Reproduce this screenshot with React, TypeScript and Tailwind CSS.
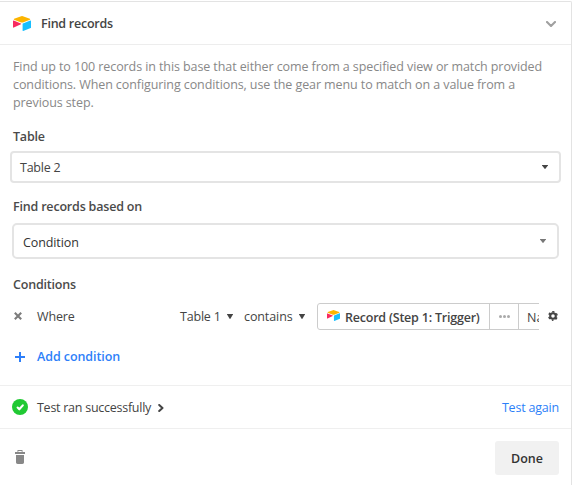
import type { ReactNode } from 'react';

function BaseLogo({ className }: { className: string }) {
  return (
    <svg className={className} viewBox="0 0 18 15" aria-hidden="true">
      <path d="M8.2.2a2.5 2.5 0 0 1 1.7 0l7 2.6c.4.2.4.7 0 .9L9.9 6.4a2.5 2.5 0 0 1-1.8 0L1.1 3.7c-.4-.2-.4-.7 0-.9z" fill="#fcb400" />
      <path d="M9.6 7.9v6.600c0 .4.3.6.6.5l7.5-2.900a.5.5 0 0 0 .3-.5V5c0-.4-.3-.6-.6-.5L9.900 7.400a.5.5 0 0 0-.3.5z" fill="#18bfff" />
      <path d="M7.900 8.200.8 11.600c-.4.2-.8 0-.8-.4V5.100c0-.4.3-.6.7-.5l7.100 2.800c.5.2.5.6.1.8z" fill="#f82b60" />
    </svg>
  );
}

function Caret({ className }: { className: string }) {
  return (
    <svg className={className} viewBox="0 0 8 5" preserveAspectRatio="none" fill="currentColor" aria-hidden="true">
      <path d="M.3 0h7.400c.3 0 .4.3.2.6L4.500 4.700a.7.7 0 0 1-1 0L.1.6C-.1.3 0 0 .3 0z" />
    </svg>
  );
}

function Label({ children }: { children: ReactNode }) {
  return (
    <div className="h-[18px] pl-[13px] pt-px text-[12.5px] font-semibold leading-[18px] tracking-[-0.19px] text-[#4a4a4a]">
      {children}
    </div>
  );
}

export default function App() {
  return (
    <div className="h-[485px] w-[572px] overflow-hidden bg-white pt-px font-['Open_Sans','Noto_Sans',sans-serif] text-[12.5px] leading-[18px] text-[#444]">
      <div className="flex h-[484px] flex-col rounded-tr-[2px] border-r border-t border-[#e3e3e3]">
        <header className="flex h-[43px] shrink-0 items-center border-b border-[#ededed] pl-[13px] pr-[15px] pt-px">
          <BaseLogo className="h-[15px] w-[18px]" />
          <h1 className="ml-[10px] pt-px text-[12.5px] font-semibold tracking-[-0.25px]">Find records</h1>
          <svg className="ml-auto mt-px" width="10" height="6" viewBox="0 0 10 6" fill="none" stroke="#a0a0a0" strokeWidth="2.1" strokeLinecap="round" strokeLinejoin="round">
            <path d="M1 1l4 4 4-4" />
          </svg>
        </header>

        <main className="flex h-[340px] shrink-0 flex-col pt-[13px]">
          <p className="whitespace-nowrap pl-[13px] tracking-[-0.09px] text-[#888]">
            Find up to 100 records in this base that either come from a specified view or match provided
            <br />
            conditions. When configuring conditions, use the gear menu to match on a value from a
            <br />
            previous step.
          </p>

          <div className="mt-[15px]">
            <Label>Table</Label>
            <button type="button" className="ml-[10px] mt-[6px] flex h-8 w-[551px] items-center justify-between rounded-[4px] border-2 border-[#e4e4e4] pl-2 pr-[11px]">
              <span className="pt-px tracking-[-0.25px]">Table 2</span>
              <Caret className="h-1 w-1.5 text-[#444]" />
            </button>
          </div>

          <div className="mt-[14px]">
            <Label>Find records based on</Label>
            <button type="button" className="ml-[12px] mt-[8px] flex h-9 w-[547px] items-center justify-between rounded-[5px] border-2 border-[#e4e4e4] pl-[9px] pr-[11px]">
              <span className="mt-[3px] tracking-[-0.1px] text-[#333]">Condition</span>
              <Caret className="h-1 w-1.5 text-[#777]" />
            </button>
          </div>

          <div className="mt-[16px]">
            <Label>Conditions</Label>
            <div className="mt-[10px] flex h-[27px] items-center whitespace-nowrap pl-[14px]">
              <svg className="mb-px" width="8" height="8" viewBox="0 0 8 8" stroke="#7c7c7c" strokeWidth="2.1">
                <path d="M.8.8l6.400 6.400M7.200.8L.8 7.200" />
              </svg>
              <span className="ml-[15px] w-[143px] tracking-[-0.15px]">Where</span>
              <span className="w-[47px] tracking-[-0.2px]">Table 1</span>
              <Caret className="h-[5px] w-1.5" />
              <span className="ml-[11px] w-[55px] tracking-[-0.1px]">contains</span>
              <Caret className="h-[5px] w-1.5" />
              <div className="ml-[12px] h-[27px] w-[222px] overflow-hidden">
                <div className="flex h-[27px] w-[260px] items-stretch rounded-[3px] border border-[#ccc]">
                  <span className="flex w-[171px] items-center pl-[9px] font-semibold tracking-[-0.21px]">
                    <BaseLogo className="mb-[2px] mr-[5px] h-[11px] w-[13px] shrink-0" />
                    <span className="pt-[2px]">Record (Step 1: Trigger)</span>
                  </span>
                  <span className="flex w-[30px] items-center justify-center border-x border-[#ccc]">
                    <svg className="mb-px" width="11" height="3" viewBox="0 0 11 3" fill="#aaa">
                      <circle cx="1.5" cy="1.5" r="1.5" />
                      <circle cx="5.5" cy="1.5" r="1.5" />
                      <circle cx="9.5" cy="1.5" r="1.5" />
                    </svg>
                  </span>
                  <span className="flex items-center pl-[8px] pt-[2px]">Name</span>
                </div>
              </div>
              <svg className="mb-px ml-[9px]" width="10" height="10" viewBox="0 0 11 11" fill="none" stroke="#444">
                <circle cx="5.5" cy="5.5" r="3.1" strokeWidth="2.3" />
                <circle cx="5.5" cy="5.5" r="4.6" strokeWidth="1.7" strokeDasharray="2.4 2.417" strokeDashoffset="1.2" transform="rotate(90 5.5 5.5)" />
              </svg>
            </div>
            <button type="button" className="mt-[18px] flex h-[18px] items-center pl-[15px] font-semibold text-[#2d7ff9]">
              <svg width="10" height="10" viewBox="0 0 10 10" fill="currentColor">
                <path d="M4 0h2v4h4v2H6v4H4V6H0V4h4z" />
              </svg>
              <span className="ml-[12px] tracking-[-0.07px]">Add condition</span>
            </button>
          </div>
        </main>

        <section className="flex h-[43px] shrink-0 items-center border-t border-[#efefef] pl-[12px] pr-[12px]">
          <svg width="16" height="16" viewBox="0 0 16 16">
            <circle cx="8" cy="8" r="8" fill="#20c933" />
            <path d="M5.6 8.6l1.7 1.7 3.5-3.9" fill="none" stroke="#fff" strokeWidth="2.1" strokeLinecap="round" strokeLinejoin="round" />
          </svg>
          <span className="ml-[9px] pt-px tracking-[-0.26px]">Test ran successfully</span>
          <svg className="ml-[7px] mt-[2px]" width="6" height="8" viewBox="0 0 6 8" fill="none" stroke="#444" strokeWidth="2" strokeLinecap="round" strokeLinejoin="round">
            <path d="M1.2 1l3.3 3-3.3 3" />
          </svg>
          <button type="button" className="ml-auto pt-px tracking-[-0.2px] text-[#2d7ff9]">Test again</button>
        </section>

        <footer className="flex h-[57px] shrink-0 items-start justify-between border-t border-[#efefef] pl-[15px] pr-[12px] pt-[12px]">
          <svg className="mt-[9px]" width="10" height="14" viewBox="0 0 10 14" fill="#888">
            <path fillRule="evenodd" d="M2.5 0h5v2H10v2H0V2h2.5zM3.3 1v1h3.4V1z" />
            <path d="M1 5h8v7.3c0 1-.6 1.7-1.7 1.7H2.7C1.6 14 1 13.3 1 12.3z" />
          </svg>
          <button type="button" className="h-[34px] w-16 rounded-[3px] bg-[#f1f1f1] pt-px text-[12.5px] font-semibold text-[#333]">Done</button>
        </footer>
      </div>
    </div>
  );
}
